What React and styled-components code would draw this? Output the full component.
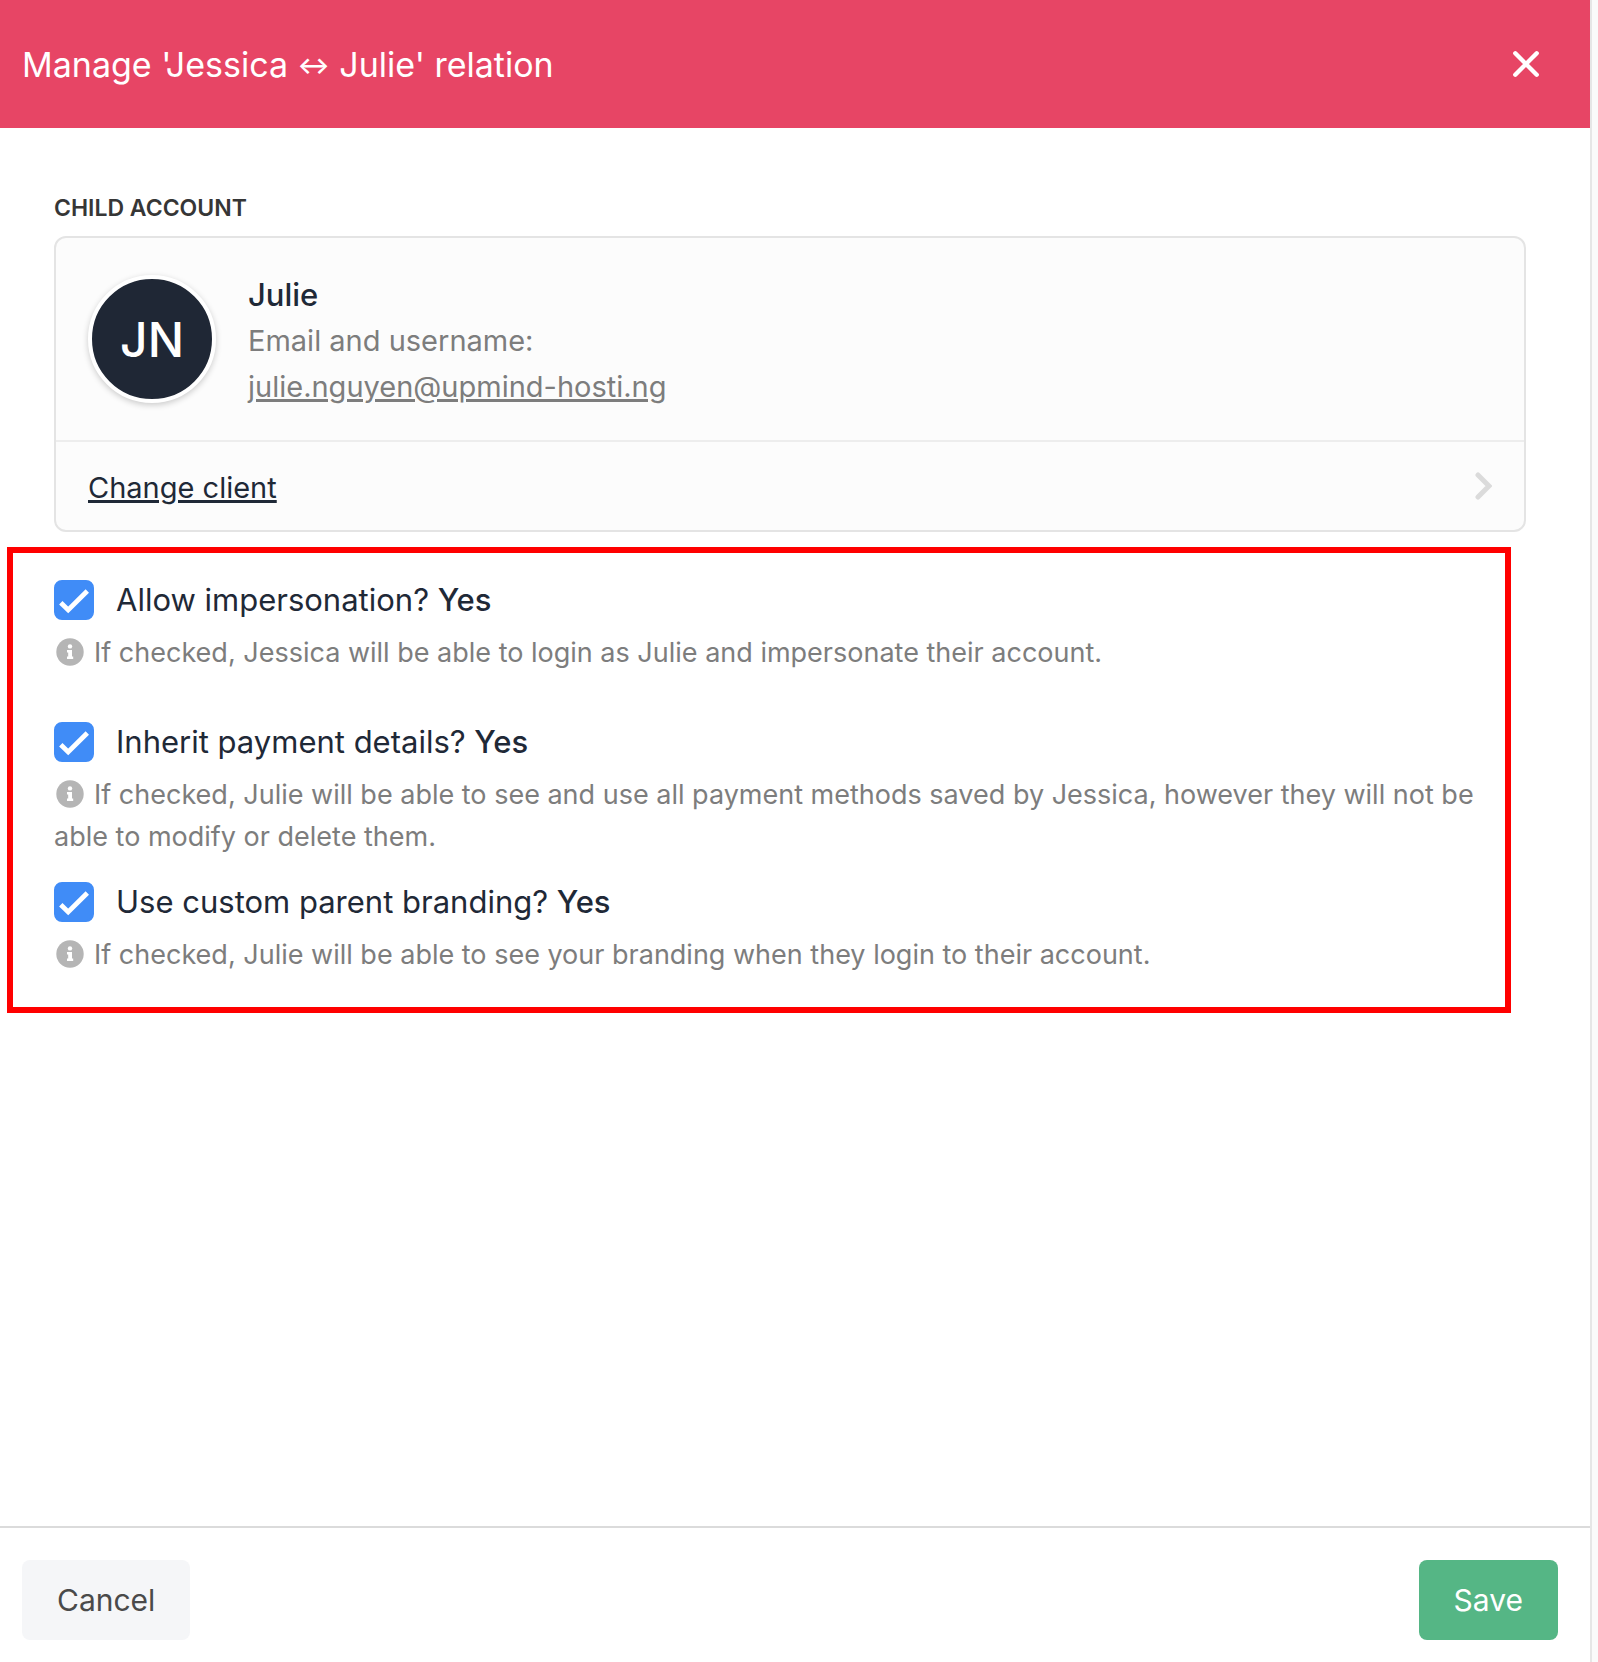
import React, { useState } from 'react'
import styled, { createGlobalStyle } from 'styled-components'

const GlobalStyle = createGlobalStyle`
  *, *::before, *::after {
    box-sizing: border-box;
  }

  body {
    margin: 0;
    background-color: #fafafa;
    color: #1f2937;
    font-family: Inter, 'Liberation Sans', sans-serif;
  }

  h1, h2, p {
    margin: 0;
  }
`

const Panel = styled.main`
  display: flex;
  flex-direction: column;
  min-height: 100vh;
  margin-right: 6px;
  border-right: 2px solid #e6e6e6;
  background-color: #fff;
`

const Header = styled.header`
  display: flex;
  align-items: center;
  justify-content: space-between;
  height: 128px;
  padding: 0 44px 0 22px;
  background-color: #e74565;
  color: #fff;
`

const Title = styled.h1`
  padding-top: 2px;
  font-size: 34px;
  font-weight: 400;
  line-height: 48px;
`

const Arrow = styled.span`
  font-size: 24px;
  font-weight: 600;
  line-height: 24px;
  vertical-align: 3px;
`

const CloseButton = styled.button`
  display: flex;
  align-items: center;
  justify-content: center;
  width: 40px;
  height: 40px;
  padding: 0;
  border: none;
  background: none;
  color: inherit;
  cursor: pointer;
`

const Body = styled.div`
  flex: 1;
  padding-top: 64px;
`

const Account = styled.section`
  margin: 0 64px 0 54px;
`

const SectionLabel = styled.h2`
  margin-bottom: 12px;
  color: #363636;
  font-size: 23px;
  font-weight: 600;
  line-height: 32px;
  text-transform: uppercase;
`

const Card = styled.div`
  border: 2px solid #e4e4e4;
  border-radius: 12px;
  background-color: #fcfcfc;
`

const Client = styled.div`
  display: flex;
  align-items: center;
  gap: 32px;
  height: 204px;
  padding: 0 32px;
  border-bottom: 2px solid #ededed;
`

const Avatar = styled.div`
  display: flex;
  align-items: center;
  justify-content: center;
  width: 128px;
  height: 128px;
  border: 4px solid #fff;
  border-radius: 50%;
  background-color: #1f2735;
  box-shadow: 0 2px 6px rgba(0, 0, 0, 0.2);
  color: #fff;
  font-size: 48px;
  font-weight: 500;
`

const ClientInfo = styled.div`
  padding-top: 3px;
  color: #7d7d7d;
  font-size: 29px;
  line-height: 46px;
`

const ClientName = styled.p`
  color: #1f2937;
  font-size: 31px;
  font-weight: 500;
`

const EmailLink = styled.a`
  color: inherit;
  text-decoration-thickness: 3px;
`

const ChangeClient = styled.a`
  display: flex;
  align-items: center;
  justify-content: space-between;
  height: 88px;
  padding: 0 32px;
  color: #1f2937;
  font-size: 29px;
  text-decoration-thickness: 3px;

  span {
    padding-top: 3px;
  }
`

const Options = styled.section`
  display: flex;
  flex-direction: column;
  gap: 24px;
  margin: 15px 79px 0 7px;
  padding: 27px 15px 7px 41px;
  border: 6px solid #f00;
`

const OptionLabel = styled.label`
  display: flex;
  align-items: center;
  gap: 22px;
  font-size: 31px;
  line-height: 40px;
  cursor: pointer;
`

const CheckWrapper = styled.span`
  display: grid;
  width: 40px;
  height: 40px;

  > * {
    grid-area: 1 / 1;
  }
`

const Checkbox = styled.input`
  width: 40px;
  height: 40px;
  margin: 0;
  appearance: none;
  border: 2px solid #c4c4c4;
  border-radius: 8px;
  background-color: #fff;
  cursor: pointer;

  &:checked {
    border-color: #408cf7;
    background-color: #408cf7;
  }
`

const Answer = styled.span`
  font-weight: 500;
`

const Help = styled.p`
  min-height: 66px;
  margin-top: 12px;
  color: #7d7d7d;
  font-size: 27px;
  line-height: 42px;
`

const InfoIcon = styled.svg`
  width: 28px;
  height: 28px;
  margin: 0 10px 0 2px;
  vertical-align: -4px;
`

const Footer = styled.footer`
  display: flex;
  align-items: center;
  justify-content: space-between;
  padding: 32px 32px 22px 22px;
  border-top: 2px solid #dbdbdb;
`

const Button = styled.button`
  height: 80px;
  padding: 0 35px;
  border: none;
  border-radius: 8px;
  background-color: ${({ $primary }) => ($primary ? '#55b685' : '#f5f6f8')};
  color: ${({ $primary }) => ($primary ? '#fff' : '#4a4a4a')};
  font-family: inherit;
  font-size: 30px;
  cursor: pointer;
`

const options = [
  {
    id: 'impersonation',
    label: 'Allow impersonation?',
    help: 'If checked, Jessica will be able to login as Julie and impersonate their account.',
  },
  {
    id: 'payment',
    label: 'Inherit payment details?',
    help: 'If checked, Julie will be able to see and use all payment methods saved by Jessica, however they will not be able to modify or delete them.',
  },
  {
    id: 'branding',
    label: 'Use custom parent branding?',
    help: 'If checked, Julie will be able to see your branding when they login to their account.',
  },
]

const Option = ({ id, label, help }) => {
  const [checked, setChecked] = useState(true)

  return (
    <div>
      <OptionLabel htmlFor={id}>
        <CheckWrapper>
          <Checkbox
            id={id}
            type="checkbox"
            checked={checked}
            aria-describedby={`${id}-help`}
            onChange={(event) => setChecked(event.target.checked)}
          />
          {checked && (
            <svg width="40" height="40" viewBox="0 0 40 40" pointerEvents="none" aria-hidden="true">
              <path d="M6.8 22.8 L14.2 30 L33.3 11" fill="none" stroke="#fff" strokeWidth="4.8" />
            </svg>
          )}
        </CheckWrapper>
        <span>
          {label} <Answer>{checked ? 'Yes' : 'No'}</Answer>
        </span>
      </OptionLabel>
      <Help id={`${id}-help`}>
        <InfoIcon viewBox="0 0 28 28" aria-hidden="true">
          <circle cx="14" cy="14" r="13.7" fill="#b5b5b5" />
          <circle cx="14" cy="8.4" r="2.2" fill="#fff" />
          <path d="M11 12 h5 v6.5 h1.2 v2.6 h-6.2 v-2.6 h1.2 v-3.9 h-1.2 z" fill="#fff" />
        </InfoIcon>
        {help}
      </Help>
    </div>
  )
}

const App = () => {
  return (
    <>
      <GlobalStyle />
      <Panel>
        <Header>
          <Title>
            Manage 'Jessica <Arrow>↔</Arrow> Julie' relation
          </Title>
          <CloseButton type="button" aria-label="Close">
            <svg width="28" height="28" viewBox="0 0 28 28" aria-hidden="true">
              <path d="M3.3 3.3 L24.7 24.7 M24.7 3.3 L3.3 24.7" stroke="#fff" strokeWidth="4.4" strokeLinecap="round" />
            </svg>
          </CloseButton>
        </Header>
        <Body>
          <Account>
            <SectionLabel>Child account</SectionLabel>
            <Card>
              <Client>
                <Avatar>JN</Avatar>
                <ClientInfo>
                  <ClientName>Julie</ClientName>
                  <p>Email and username:</p>
                  <EmailLink href="mailto:julie.nguyen@upmind-hosti.ng">
                    julie.nguyen@upmind-hosti.ng
                  </EmailLink>
                </ClientInfo>
              </Client>
              <ChangeClient href="#change-client">
                <span>Change client</span>
                <svg width="18" height="28" viewBox="0 0 18 28" aria-hidden="true">
                  <path
                    d="M4 3 L15 14 L4 25"
                    fill="none"
                    stroke="#dbdbdb"
                    strokeWidth="5"
                    strokeLinecap="round"
                  />
                </svg>
              </ChangeClient>
            </Card>
          </Account>
          <Options>
            {options.map((option) => (
              <Option key={option.id} {...option} />
            ))}
          </Options>
        </Body>
        <Footer>
          <Button type="button">Cancel</Button>
          <Button type="button" $primary>Save</Button>
        </Footer>
      </Panel>
    </>
  )
}

export default App
